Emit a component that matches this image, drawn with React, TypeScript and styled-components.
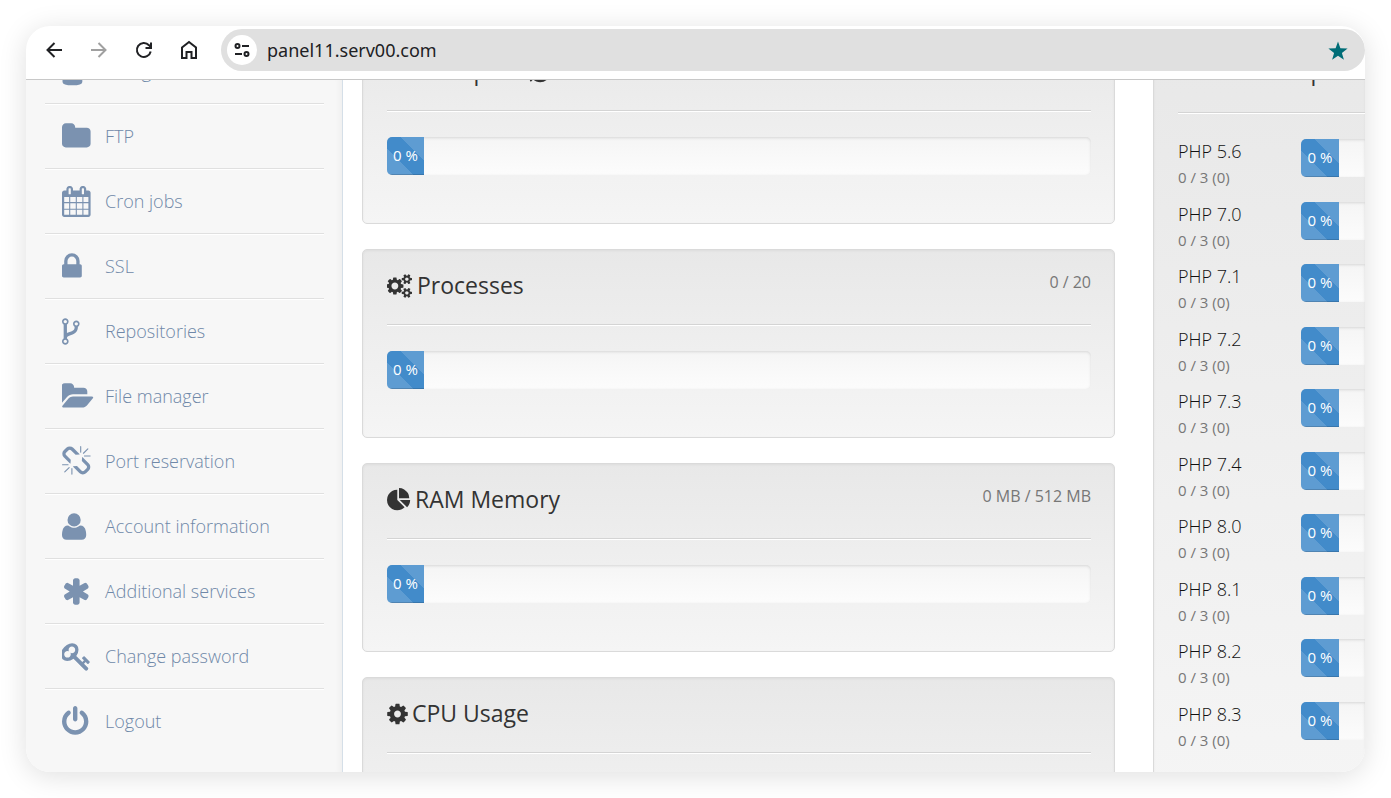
import React from "react";
import styled, { createGlobalStyle } from "styled-components";

const GlobalStyle = createGlobalStyle`
  * { box-sizing: border-box; }
  html, body { margin: 0; background: #fff; }
  body { font-family: "Open Sans", "Noto Sans", sans-serif; color: #333; }
`;

const Desk = styled.div`
  height: 100vh;
  padding: 26px;
`;

const BrowserWindow = styled.div`
  height: 100%;
  display: flex;
  flex-direction: column;
  overflow: hidden;
  border-radius: 24px;
  background: #fff;
  box-shadow: 0 4px 28px rgba(0, 0, 0, 0.13);
`;

const Toolbar = styled.header`
  flex: none;
  display: flex;
  align-items: center;
  height: 54px;
  padding: 3px 0 8px 15px;
  border-bottom: 1px solid #c8c8c8;
`;

const NavButton = styled.button<{ $dim?: boolean }>`
  display: flex;
  align-items: center;
  justify-content: center;
  width: 45px;
  height: 42px;
  padding: 0 20px 0 0;
  border: 0;
  background: none;
  color: ${(p) => (p.$dim ? "#a0a0a0" : "#202124")};
`;

const AddressBar = styled.div`
  flex: 1;
  display: flex;
  align-items: center;
  gap: 8px;
  height: 42px;
  padding: 0 17px 0 6px;
  border-radius: 21px;
  background: #e0e0e0;
`;

const RoundButton = styled.button`
  display: flex;
  align-items: center;
  justify-content: center;
  width: 30px;
  height: 30px;
  padding: 0;
  border: 0;
  border-radius: 50%;
  background: #fff;
  color: #202124;
`;

const UrlInput = styled.input`
  flex: 1;
  min-width: 0;
  height: 30px;
  padding: 0 2px;
  border: 0;
  outline: 0;
  background: none;
  color: #202124;
  font: 18px "Noto Sans", "Open Sans", sans-serif;
`;

const StarButton = styled.button`
  display: flex;
  padding: 2px 0 0;
  border: 0;
  background: none;
  color: #006d77;
`;

const Viewport = styled.div`
  flex: 1;
  min-height: 0;
  display: flex;
  overflow: hidden;
`;

const Sidebar = styled.nav`
  flex: 0 0 317px;
  padding: 0 18px 0 19px;
  border-right: 1px solid #d5dfe8;
  background: #f7f7f7;
  box-shadow: inset -8px 0 8px -8px rgba(0, 0, 0, 0.06);
`;

const MenuList = styled.ul`
  margin: -41px 0 0;
  padding: 0;
  list-style: none;
`;

const MenuItem = styled.li`
  height: 65px;
  border-bottom: 1px solid #e0e0e0;
  box-shadow: 0 1px 0 #fff;
  &:last-child {
    border-bottom: 0;
    box-shadow: none;
  }
`;

const MenuLink = styled.a`
  display: flex;
  align-items: center;
  gap: 10px;
  height: 64px;
  padding-left: 17px;
  color: #6f88a8;
  font-size: 18px;
  font-weight: 300;
  line-height: 24px;
  text-decoration: none;
`;

const MenuGlyph = styled.svg`
  flex: none;
  width: 33px;
  height: 31px;
  margin-top: 1px;
  fill: #7b92b0;
`;

const Content = styled.main`
  flex: 1;
  min-width: 0;
  display: flex;
  gap: 38px;
  padding-left: 19px;
`;

const Column = styled.div`
  flex: 1;
  min-width: 0;
  display: flex;
  flex-direction: column;
  gap: 25px;
  margin-top: -45px;
`;

const SideColumn = styled.div`
  flex: 0 0 212px;
  margin-top: -45px;
  overflow: hidden;
`;

const Panel = styled.section`
  flex: none;
  height: 189px;
  padding: 17px 23px 0 24px;
  border: 1px solid #dadada;
  border-radius: 5px;
  background: linear-gradient(#e8e8e8, #f5f5f5);
  box-shadow: inset 0 1px 3px rgba(0, 0, 0, 0.05);
`;

const VersionsPanel = styled(Panel)`
  height: 763px;
  padding-right: 0;
  border-right: 0;
  border-radius: 5px 0 0 0;
`;

const PanelHead = styled.header<{ $tall?: boolean }>`
  display: flex;
  justify-content: space-between;
  height: ${(p) => (p.$tall ? "60px" : "58px")};
  border-bottom: 1px solid #d4d4d4;
  box-shadow: 0 1px 0 #fff;
  white-space: nowrap;
`;

const Title = styled.h3`
  display: flex;
  align-items: center;
  gap: 4px;
  height: 36px;
  margin: 0;
  font-size: 23px;
  font-weight: 500;
  line-height: 36px;
`;

const TitleGlyph = styled.svg`
  flex: none;
  height: 24px;
  margin-top: 1px;
  fill: currentColor;
`;

const Usage = styled.span`
  color: #777;
  font-size: 16px;
  line-height: 30px;
`;

const Track = styled.div<{ $open?: boolean }>`
  height: 38px;
  overflow: hidden;
  border-radius: ${(p) => (p.$open ? "5px 0 0 5px" : "5px")};
  background: linear-gradient(#f5f5f5, #fcfcfc);
  box-shadow: inset 0 1px 3px rgba(0, 0, 0, 0.12);
`;

const PanelBody = styled.div`
  padding-top: 26px;
`;

const Fill = styled.div<{ $wide?: boolean }>`
  width: ${(p) => (p.$wide ? "38px" : "37px")};
  height: 38px;
  background-color: #428bca;
  background-image: linear-gradient(
    45deg,
    rgba(255, 255, 255, 0.15) 25%,
    transparent 25%,
    transparent 50%,
    rgba(255, 255, 255, 0.15) 50%,
    rgba(255, 255, 255, 0.15) 75%,
    transparent 75%
  );
  background-size: 50px 50px;
  background-position: 14px 0;
  box-shadow: inset 0 -1px 0 rgba(0, 0, 0, 0.15);
  color: #fff;
  font-size: 15px;
  line-height: 36px;
  text-align: center;
  white-space: nowrap;
`;

const VersionList = styled.ul`
  display: grid;
  grid-template-rows: repeat(10, 1fr);
  height: 625px;
  margin: 26px 0 0;
  padding: 0;
  list-style: none;
`;

const VersionRow = styled.li`
  display: grid;
  grid-template-columns: 123px 1fr;
`;

const VersionName = styled.div`
  color: #111;
  font-size: 18px;
  font-weight: 300;
  line-height: 25px;
`;

const VersionCount = styled.div`
  color: #777;
  font-size: 15px;
  line-height: 26px;
`;

const SMALL_COG =
  "v140q0 16-149 31-12 27-30 52 51 113 51 138 0 4-4 7-122 71-124 71-8 0-46-47t-52-68q-20 2-30 2t-30-2q-14 21-52 68t-46 47q-2 0-124-71-4-3-4-7 0-25 51-138-18-25-30-52-149-15-149-31v-140q0-16 149-31 13-29 30-52-51-113-51-138 0-4 4-7 4-2 35-20t59-34 30-16q8 0 46 46.500t52 67.500q20-2 30-2t30 2q51-71 92-112l6-2q4 0 124 70 4 3 4 7 0 25-51 138 17 23 30 52 149 15 149 31z";

const glyphs = {
  database:
    "M1472 384v192q0 160-576 160t-576-160v-192q0-192 576-192t576 192zM320 800q96 112 576 112t576-112v256q0 160-576 160t-576-160zM320 1290q96 100 576 100t576-100v210q0 200-576 200t-576-200z",
  folder: "M1728 608v704q0 92-66 158t-158 66h-1216q-92 0-158-66t-66-158v-960q0-92 66-158t158-66h320q92 0 158 66t66 158v32h672q92 0 158 66t66 158z",
  calendar:
    "M192 1664h288v-288h-288v288zm352 0h320v-288h-320v288zm-352-352h288v-320h-288v320zm352 0h320v-320h-320v320zm-352-384h288v-288h-288v288zm736 736h320v-288h-320v288zm-384-736h320v-288h-320v288zm768 736h288v-288h-288v288zm-384-352h320v-320h-320v320zm-352-864v-288q0-13-9.500-22.500t-22.500-9.500h-64q-13 0-22.500 9.500t-9.500 22.500v288q0 13 9.500 22.500t22.500 9.500h64q13 0 22.500-9.500t9.500-22.500zm736 864h288v-320h-288v320zm-384-384h320v-288h-320v288zm384 0h288v-288h-288v288zm32-480v-288q0-13-9.500-22.500t-22.500-9.500h-64q-13 0-22.500 9.500t-9.500 22.500v288q0 13 9.500 22.500t22.500 9.500h64q13 0 22.500-9.500t9.500-22.500zm384-64v1280q0 52-38 90t-90 38h-1408q-52 0-90-38t-38-90v-1280q0-52 38-90t90-38h128v-96q0-66 47-113t113-47h64q66 0 113 47t47 113v96h384v-96q0-66 47-113t113-47h64q66 0 113 47t47 113v96h128q52 0 90 38t38 90z",
  lock: "M640 768h512v-192q0-106-75-181t-181-75-181 75-75 181v192zm832 96v576q0 40-28 68t-68 28h-960q-40 0-68-28t-28-68v-576q0-40 28-68t68-28h32v-192q0-184 132-316t316-132 316 132 132 316v192h32q40 0 68 28t28 68z",
  fork: "M672 1472q0-40-28-68t-68-28-68 28-28 68 28 68 68 28 68-28 28-68zm0-1152q0-40-28-68t-68-28-68 28-28 68 28 68 68 28 68-28 28-68zm640 128q0-40-28-68t-68-28-68 28-28 68 28 68 68 28 68-28 28-68zm96 0q0 52-26 96.500t-70 69.500q-2 287-226 414-67 38-203 81-128 40-169.500 71t-41.500 100v26q44 25 70 69.500t26 96.500q0 80-56 136t-136 56-136-56-56-136q0-52 26-96.500t70-69.500v-820q-44-25-70-69.500t-26-96.500q0-80 56-136t136-56 136 56 56 136q0 52-26 96.500t-70 69.500v497q54-26 154-57 55-17 87.500-29.500t70.500-31 59-39.500 40.500-51 28-69.500 8.500-91.500q-44-25-70-69.500t-26-96.500q0-80 56-136t136-56 136 56 56 136z",
  folderOpen:
    "M1815 952q0 31-31 66l-336 396q-43 51-120.500 86.500t-143.500 35.500h-1088q-34 0-60.500-13t-26.500-43q0-31 31-66l336-396q43-51 120.500-86.500t143.500-35.500h1088q34 0 60.500 13t26.500 43zm-343-344v160h-832q-94 0-197 47.500t-164 119.500l-337 396-5 6q0-4-.5-12.500t-.5-12.500v-960q0-92 66-158t158-66h320q92 0 158 66t66 158v32h544q92 0 158 66t66 158z",
  unlink:
    "M503 1271l-256 256q-10 9-23 9-12 0-23-9-9-10-9-23t9-23l256-256q10-9 23-9t23 9q9 10 9 23t-9 23zm169 41v320q0 14-9 23t-23 9-23-9-9-23v-320q0-14 9-23t23-9 23 9 9 23zm-224-224q0 14-9 23t-23 9h-320q-14 0-23-9t-9-23 9-23 23-9h320q14 0 23 9t9 23zm1264 128q0 120-85 203l-147 146q-83 83-203 83-121 0-204-85l-334-335q-21-21-42-56l239-18 273 274q28 28 68 28.500t68-27.500l147-146q28-28 28-67 0-40-28-68l-274-275 18-239q35 21 56 42l336 336q84 86 84 204zm-617-724l-239 18-273-274q-28-28-68-28-39 0-68 27l-147 146q-28 28-28 67 0 40 28 68l274 274-18 240q-35-21-56-42l-336-336q-84-86-84-204 0-120 85-203l147-146q83-83 203-83 121 0 204 85l334 335q21 21 42 56zm633 84q0 14-9 23t-23 9h-320q-14 0-23-9t-9-23 9-23 23-9h320q14 0 23 9t9 23zm-544-544v320q0 14-9 23t-23 9-23-9-9-23v-320q0-14 9-23t23-9 23 9 9 23zm407 151l-256 256q-11 9-23 9t-23-9q-9-10-9-23t9-23l256-256q10-9 23-9t23 9q9 10 9 23t-9 23z",
  user: "M1600 1405q0 120-73 189.500t-194 69.500h-874q-121 0-194-69.500t-73-189.500q0-53 3.500-103.500t14-109 26.500-108.500 43-97.500 62-81 85.500-53.500 111.500-20q9 0 42 21.500t74.500 48 108 48 133.500 21.500 133.500-21.500 108-48 74.500-48 42-21.500q61 0 111.500 20t85.500 53.500 62 81 43 97.500 26.500 108.500 14 109 3.500 103.500zm-320-893q0 159-112.500 271.500t-271.500 112.500-271.500-112.500-112.500-271.500 112.500-271.500 271.500-112.500 271.500 112.500 112.500 271.500z",
  asterisk:
    "M1546 1050q46 26 59.500 77.500t-12.500 97.500l-64 110q-26 46-77.500 59.500t-97.500-12.500l-266-153v307q0 52-38 90t-90 38h-128q-52 0-90-38t-38-90v-307l-266 153q-46 26-97.500 12.500t-77.500-59.500l-64-110q-26-46-12.500-97.500t59.500-77.500l266-154-266-154q-46-26-59.500-77.500t12.500-97.500l64-110q26-46 77.500-59.500t97.500 12.500l266 153v-307q0-52 38-90t90-38h128q52 0 90 38t38 90v307l266-153q46-26 97.500-12.500t77.500 59.500l64 110q26 46 12.500 97.500t-59.500 77.500l-266 154z",
  key: "M832 512q0-80-56-136t-136-56-136 56-56 136q0 42 19 83-41-19-83-19-80 0-136 56t-56 136 56 136 136 56 136-56 56-136q0-42-19-83 41 19 83 19 80 0 136-56t56-136zm851 704q0 17-49 66t-66 49q-9 0-28.500-16t-36.500-33-38.500-40-24.500-26l-96 96 220 220q28 28 28 68 0 42-39 81t-81 39q-40 0-68-28l-671-671q-176 131-365 131-163 0-265.500-102.500t-102.500-265.500q0-160 95-313t248-248 313-95q163 0 265.500 102.500t102.500 265.500q0 189-131 365l355 355 96-96q-3-3-26-24.500t-40-38.500-33-36.500-16-28.500q0-17 49-66t66-49q13 0 23 10 6 6 46 44.500t82 79.500 86.500 86 73 78 28.500 41z",
  power:
    "M1664 896q0 156-61 298t-164 245-245 164-298 61-298-61-245-164-164-245-61-298q0-182 80.500-343t226.500-270q43-32 95.500-25t83.500 50q32 42 24.500 94.500t-49.500 84.500q-98 74-151.500 181t-53.500 228q0 104 40.500 198.500t109.500 163.500 163.500 109.500 198.500 40.500 198.500-40.500 163.500-109.500 109.500-163.500 40.500-198.500q0-121-53.500-228t-151.500-181q-42-32-49.500-84.500t24.500-94.500q31-43 84-50t95 25q146 109 226.500 270t80.500 343zm-640-768v640q0 52-38 90t-90 38-90-38-38-90v-640q0-52 38-90t90-38 90 38 38 90z",
  cog: "M1152 896q0-106-75-181t-181-75-181 75-75 181 75 181 181 75 181-75 75-181zm512-109v222q0 12-8 23t-20 13l-185 28q-19 54-39 91 35 50 107 138 10 12 10 25t-9 23q-27 37-99 108t-94 71q-12 0-26-9l-138-108q-44 23-91 38-16 136-29 186-7 28-36 28h-222q-14 0-24.500-8.500t-11.500-21.500l-28-184q-49-16-90-37l-141 107q-10 9-25 9-14 0-25-11-126-114-165-168-7-10-7-23 0-12 8-23 15-21 51-66.500t54-70.500q-27-50-41-99l-183-27q-13-2-21-12.500t-8-23.500v-222q0-12 8-23t19-13l186-28q14-46 39-92-40-57-107-138-10-12-10-24 0-10 9-23 26-36 98.500-107.500t94.500-71.500q13 0 26 10l138 107q44-23 91-38 16-136 29-186 7-28 36-28h222q14 0 24.500 8.500t11.500 21.500l28 184q49 16 90 37l142-107q9-9 24-9 13 0 25 10 129 119 165 170 7 8 7 22 0 12-8 23-15 21-51 66.500t-54 70.500q26 50 41 98l183 28q13 2 21 12.500t8 23.500z",
  cogs:
    "M832 896q0-106-75-181t-181-75-181 75-75 181 75 181 181 75 181-75 75-181zm768 512q0-52-38-90t-90-38-90 38-38 90q0 53 37.500 90.500t90.500 37.500 90.500-37.500 37.500-90.500zm0-1024q0-52-38-90t-90-38-90 38-38 90q0 53 37.500 90.500t90.500 37.500 90.500-37.500 37.500-90.500zm-384 421v185q0 10-7 19.500t-16 10.500l-155 24q-11 35-32 76 34 48 90 115 7 11 7 20 0 12-7 19-23 30-82.500 89.500t-78.500 59.500q-11 0-21-7l-115-90q-37 19-77 31-11 108-23 155-7 24-30 24h-186q-11 0-20-7.500t-10-17.500l-23-153q-34-10-75-31l-118 89q-7 7-20 7-11 0-21-8-144-133-144-160 0-9 7-19 10-14 41-53t47-61q-23-44-35-82l-152-24q-10-1-17-9.500t-7-19.500v-185q0-10 7-19.500t16-10.500l155-24q11-35 32-76-34-48-90-115-7-11-7-20 0-12 7-20 22-30 82-89t79-59q11 0 21 7l115 90q34-18 77-32 11-108 23-154 7-24 30-24h186q11 0 20 7.500t10 17.500l23 153q34 10 75 31l118-89q8-7 20-7 11 0 21 8 144 133 144 160 0 8-7 19-12 16-42 54t-45 60q23 48 34 82l152 23q10 2 17 10.500t7 19.500z" +
    "M1856 1338" + SMALL_COG + "M1856 314" + SMALL_COG,
  pie: "M768 890l546 546q-106 108-247.500 168t-298.500 60q-209 0-385.500-103t-279.500-279.500-103-385.500 103-385.500 279.500-279.500 385.500-103v762zm187 6h773q0 157-60 298.500t-168 247.500zm709-128h-768v-768q209 0 385.500 103t279.500 279.500 103 385.500z",
  refresh:
    "M1639 1056q0 5-1 7-64 268-268 434.500t-478 166.500q-146 0-282.500-55t-243.500-157l-129 129q-19 19-45 19t-45-19-19-45v-448q0-26 19-45t45-19h448q26 0 45 19t19 45-19 45l-137 137q71 66 161 102t187 36q134 0 250-65t186-179q11-17 53-117 8-23 30-23h192q13 0 22.500 9.500t9.500 22.500z",
};

type GlyphName = keyof typeof glyphs;

const menu: { label: string; glyph: GlyphName; x: number }[] = [
  { label: "MongoDB", glyph: "database", x: 290 },
  { label: "FTP", glyph: "folder", x: 64 },
  { label: "Cron jobs", glyph: "calendar", x: 64 },
  { label: "SSL", glyph: "lock", x: 320 },
  { label: "Repositories", glyph: "fork", x: 384 },
  { label: "File manager", glyph: "folderOpen", x: 0 },
  { label: "Port reservation", glyph: "unlink", x: 64 },
  { label: "Account information", glyph: "user", x: 192 },
  { label: "Additional services", glyph: "asterisk", x: 64 },
  { label: "Change password", glyph: "key", x: 64 },
  { label: "Logout", glyph: "power", x: 128 },
];

const panels: { title: string; glyph: GlyphName; box: string; width: number; usage?: string; reload?: boolean }[] = [
  { title: "Disk space", glyph: "folder", box: "64 0 1664 1792", width: 20, reload: true },
  { title: "Processes", glyph: "cogs", box: "0 0 1920 1792", width: 26, usage: "0 / 20" },
  { title: "RAM Memory", glyph: "pie", box: "0 0 1792 1792", width: 24, usage: "0 MB / 512 MB" },
  { title: "CPU Usage", glyph: "cog", box: "128 0 1536 1792", width: 21 },
];

const versions = ["5.6", "7.0", "7.1", "7.2", "7.3", "7.4", "8.0", "8.1", "8.2", "8.3"];

function Meter({ label, open }: { label: string; open?: boolean }) {
  return (
    <Track $open={open} role="progressbar" aria-label={label} aria-valuenow={0} aria-valuemin={0} aria-valuemax={100}>
      <Fill $wide={open}>0 %</Fill>
    </Track>
  );
}

export default function App() {
  return (
    <>
      <GlobalStyle />
      <Desk>
        <BrowserWindow>
          <Toolbar>
            <NavButton aria-label="Back">
              <svg width="18" height="18" viewBox="0 0 18 18" fill="none" stroke="currentColor" strokeWidth="2">
                <path d="M17 9H3M9.500 2L2.500 9l7 7" />
              </svg>
            </NavButton>
            <NavButton aria-label="Forward" $dim>
              <svg width="18" height="18" viewBox="0 0 18 18" fill="none" stroke="currentColor" strokeWidth="2">
                <path d="M1 9h14M8.500 2l7 7-7 7" />
              </svg>
            </NavButton>
            <NavButton aria-label="Reload">
              <svg width="18" height="18" viewBox="0 0 18 18" fill="none" stroke="currentColor" strokeWidth="2">
                <path d="M15.700 10.500A7 7 0 1 1 14 4.200L16 6.500M16 1.500v5.500h-5.500" />
              </svg>
            </NavButton>
            <NavButton aria-label="Home">
              <svg width="18" height="20" viewBox="0 0 18 20" fill="none" stroke="currentColor" strokeWidth="2">
                <path d="M2 7.500L9 2l7 5.500V18h-4.500v-6h-5v6H2z" />
              </svg>
            </NavButton>
            <AddressBar>
              <RoundButton aria-label="Site information">
                <svg width="16" height="16" viewBox="0 0 16 16" fill="none" stroke="currentColor" strokeWidth="2">
                  <circle cx="3.500" cy="4" r="2" />
                  <path d="M8 4h7M1 12h7" />
                  <circle cx="12.500" cy="12" r="2" />
                </svg>
              </RoundButton>
              <UrlInput aria-label="Address" defaultValue="panel11.serv00.com" />
              <StarButton aria-label="Bookmark">
                <svg width="20" height="20" viewBox="0 0 20 20" fill="currentColor">
                  <path d="M10 0.500l2.400 6.800 7.200.2-5.700 4.400 2 6.900L10 14.700l-5.900 4.100 2-6.900L.4 7.500l7.200-.2z" />
                </svg>
              </StarButton>
            </AddressBar>
          </Toolbar>
          <Viewport>
            <Sidebar>
              <MenuList>
                {menu.map((m) => (
                  <MenuItem key={m.label}>
                    <MenuLink href="#">
                      <MenuGlyph viewBox={`${m.x} 0 1920 1792`} preserveAspectRatio="xMinYMid meet">
                        <path d={glyphs[m.glyph]} />
                      </MenuGlyph>
                      {m.label}
                    </MenuLink>
                  </MenuItem>
                ))}
              </MenuList>
            </Sidebar>
            <Content>
              <Column>
                {panels.map((p) => (
                  <Panel key={p.title}>
                    <PanelHead>
                      <Title>
                        <TitleGlyph width={p.width} viewBox={p.box}>
                          <path d={glyphs[p.glyph]} />
                        </TitleGlyph>
                        {p.title}
                        {p.reload && (
                          <TitleGlyph width={21} viewBox="0 0 1536 1792">
                            <path d={glyphs.refresh} />
                          </TitleGlyph>
                        )}
                      </Title>
                      {p.usage && <Usage>{p.usage}</Usage>}
                    </PanelHead>
                    <PanelBody>
                      <Meter label={p.title} />
                    </PanelBody>
                  </Panel>
                ))}
              </Column>
              <SideColumn>
                <VersionsPanel>
                  <PanelHead $tall>
                    <Title>
                      <TitleGlyph width={21} viewBox="64 0 1664 1792">
                        <path d={glyphs.folder} />
                      </TitleGlyph>
                      PHP child processes
                    </Title>
                  </PanelHead>
                  <VersionList>
                    {versions.map((v) => (
                      <VersionRow key={v}>
                        <div>
                          <VersionName>PHP {v}</VersionName>
                          <VersionCount>0 / 3 (0)</VersionCount>
                        </div>
                        <Meter label={`PHP ${v}`} open />
                      </VersionRow>
                    ))}
                  </VersionList>
                </VersionsPanel>
              </SideColumn>
            </Content>
          </Viewport>
        </BrowserWindow>
      </Desk>
    </>
  );
}
